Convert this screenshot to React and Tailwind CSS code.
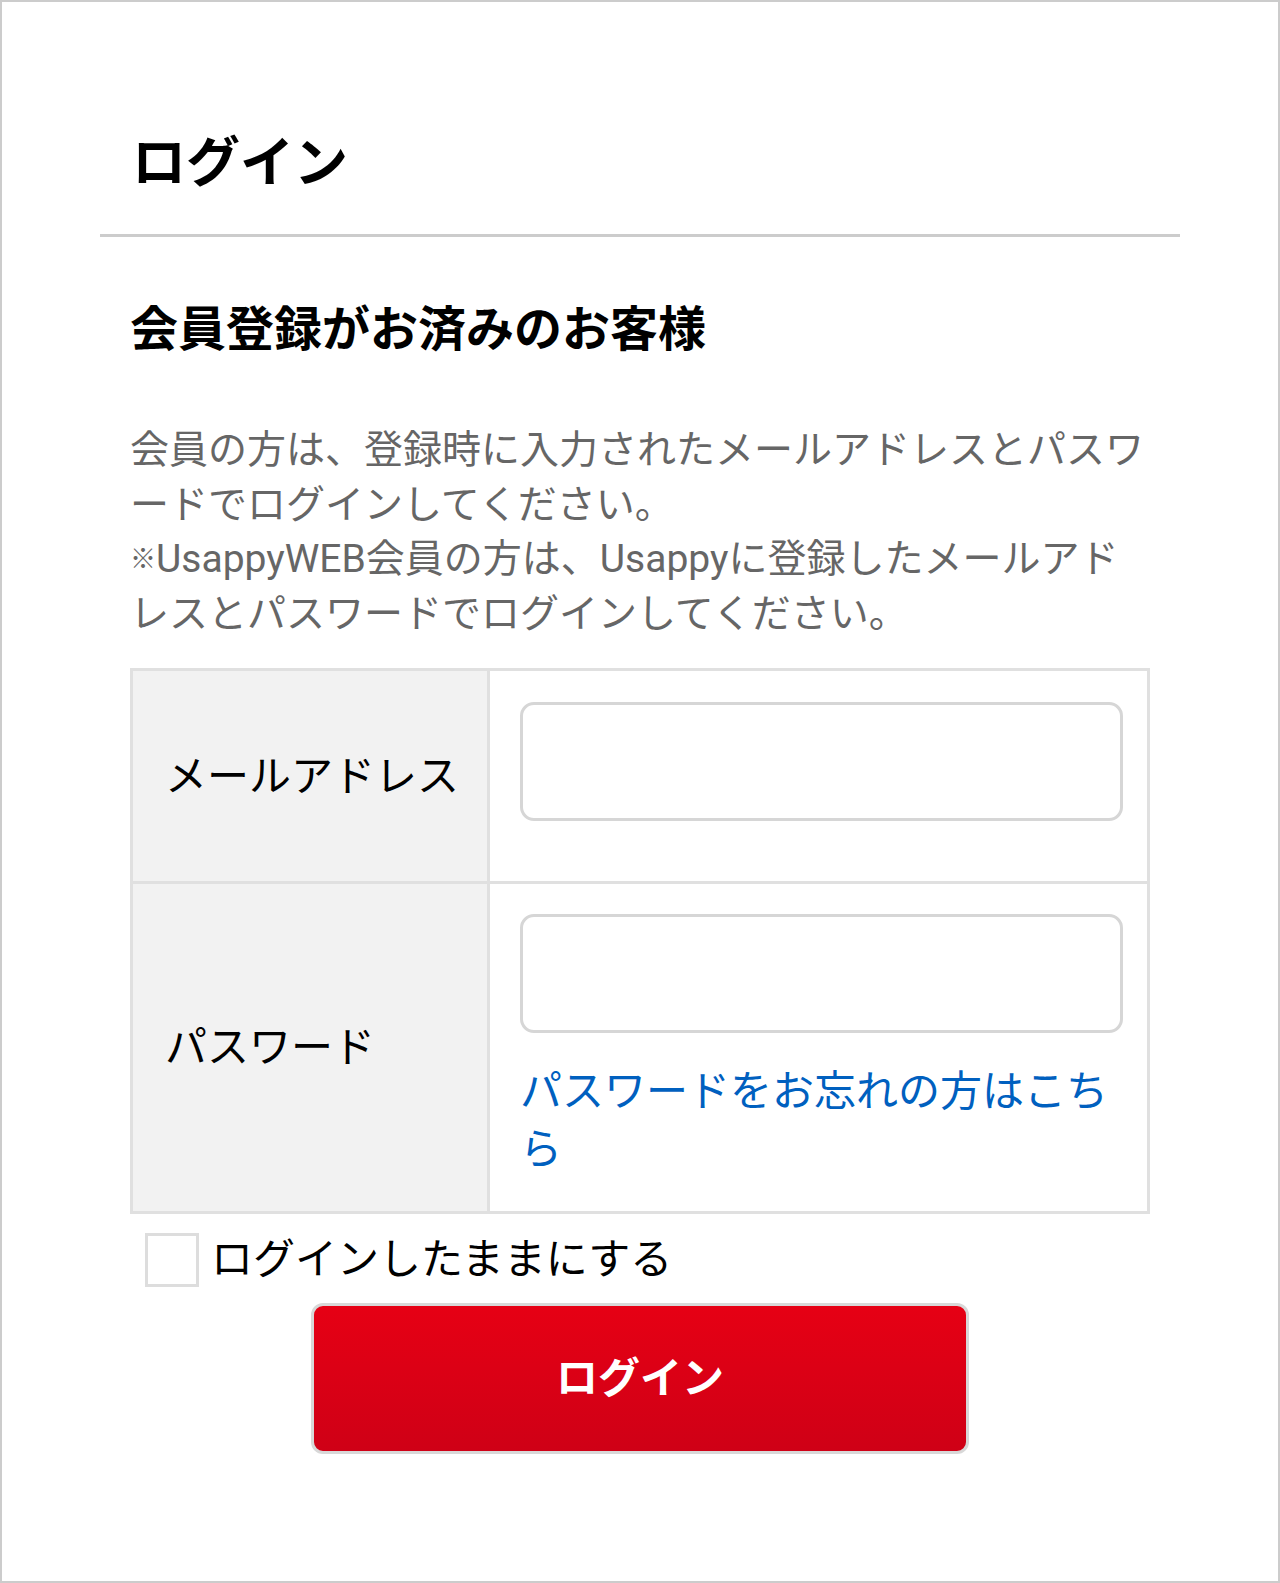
import { useState } from "react";

const Field = ({ type = "text" }) => (
  <input
    type={type}
    className="block w-full h-[119px] border-[3px] border-[#d6d6d6] rounded-[14px] bg-white px-4 text-[42px] outline-none"
  />
);

const App = () => {
  const [keep, setKeep] = useState(false);

  return (
    <div className="min-h-screen bg-white border-2 border-[#cccccc] font-['Roboto','Noto_Sans_CJK_JP',sans-serif] text-black">
      <div className="px-[98px] pt-[122px] pb-10">
        {/* TITLE */}
        <h1 className="px-[32px] text-[54px] leading-[80px] font-bold">ログイン</h1>
        <div className="mt-[30px] h-[3px] bg-[#cccccc]" />

        <div className="px-[30px]">
          <h2 className="mt-[57px] text-[48px] leading-[72px] font-bold">会員登録がお済みのお客様</h2>

          <div className="mt-[57px] text-[39px] leading-[54.5px] text-[#666666] [line-break:loose]">
            <p>会員の方は、登録時に入力されたメールアドレスとパスワードでログインしてください。</p>
            <p>
              <span className="inline-block align-top text-[26px] leading-[54.5px]">※</span>UsappyWEB会員の方は、Usappyに登録したメールアドレスとパスワードでログインしてください。
            </p>
          </div>

          {/* FORM TABLE */}
          <div className="mt-[27px] border-[3px] border-[#e0e0e0]">
            <div className="flex border-b-[3px] border-[#e0e0e0]">
              <div className="w-[357px] shrink-0 bg-[#f2f2f2] border-r-[3px] border-[#e0e0e0] flex items-center pl-[32px] pr-2 text-[42px] whitespace-nowrap">
                メールアドレス
              </div>
              <div className="flex-1 pl-[30px] pr-[24px] pt-[31px] pb-[60px]">
                <Field type="email" />
              </div>
            </div>
            <div className="flex">
              <div className="w-[357px] shrink-0 bg-[#f2f2f2] border-r-[3px] border-[#e0e0e0] flex items-center pl-[32px] pr-2 text-[42px] whitespace-nowrap">
                パスワード
              </div>
              <div className="flex-1 pl-[30px] pr-[24px] pt-[30px] pb-[32px]">
                <Field type="password" />
                <a href="#" className="block mt-[30px] text-[42px] leading-[58px] text-[#0060bf] [line-break:loose]">
                  パスワードをお忘れの方はこちら
                </a>
              </div>
            </div>
          </div>

          {/* KEEP LOGGED IN */}
          <label className="mt-[16px] ml-[15px] flex items-center gap-[12px] cursor-pointer">
            <span
              onClick={() => setKeep(!keep)}
              className="w-[54px] h-[54px] border-[3px] border-[#dddddd] bg-white flex items-center justify-center text-[36px] text-[#333]"
            >
              {keep ? "✓" : ""}
            </span>
            <span className="text-[42px] leading-[60px]">ログインしたままにする</span>
          </label>

          <button className="mt-[13px] mx-auto block w-[658px] h-[151px] rounded-[12px] border-[3px] border-[#d8d8d8] bg-gradient-to-b from-[#e60014] to-[#cf0016] text-white text-[42px] font-bold">
            ログイン
          </button>
        </div>
      </div>
    </div>
  );
};

export default App;
